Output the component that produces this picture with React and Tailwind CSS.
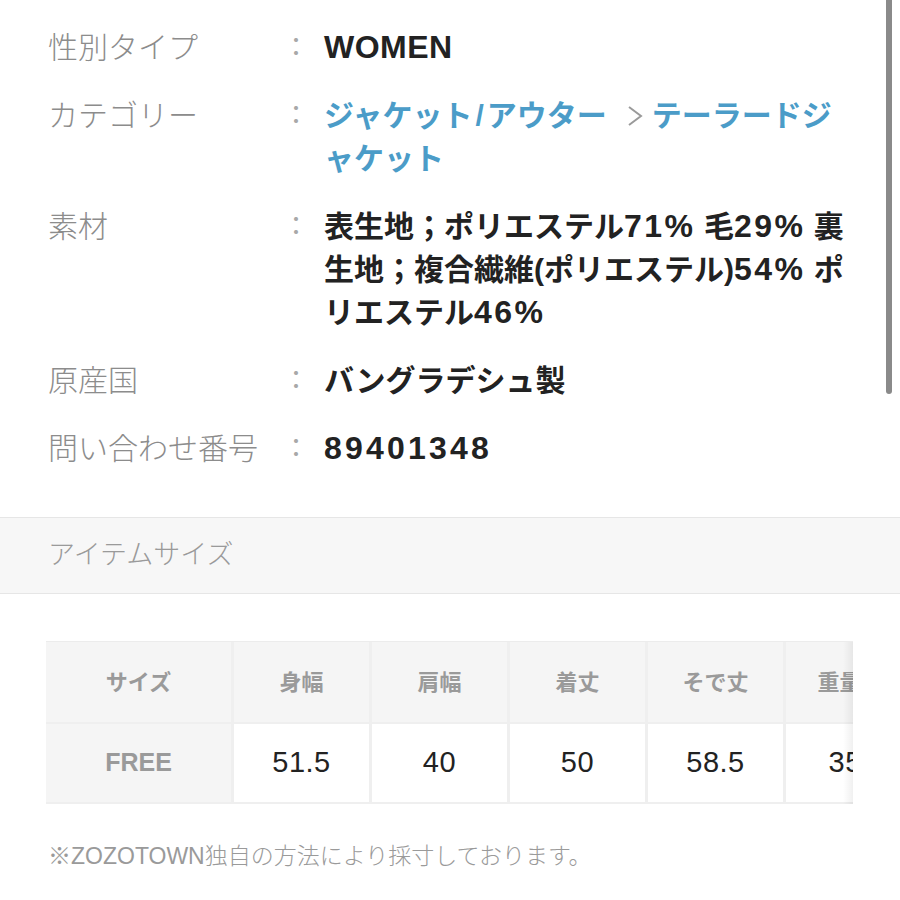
import React from 'react'

// latin runs inside the Japanese values are set a bit larger and looser
function Latin({ children, track = 'normal' }) {
  const cls = {
    normal: 'text-[32px] tracking-[0.5px]',
    wide: 'text-[32px] tracking-[2.5px]',
    wider: 'text-[32px] tracking-[3.2px]',
  }[track]
  return <span className={cls}>{children}</span>
}

function Chevron() {
  return (
    <svg width="16" height="22" viewBox="0 0 16 22" className="inline-block ml-[20px] mr-[9px] -mt-[4px] align-middle">
      <path d="M2 2 L14 11 L2 20" fill="none" stroke="#9a9a9a" strokeWidth="2" />
    </svg>
  )
}

function SpecRow({ label, children }) {
  return (
    <div className="flex items-start leading-[43px]">
      <div className="w-[233px] shrink-0 text-[30px] font-light text-[#8c8c8c]">{label}</div>
      <div className="w-[30px] shrink-0 text-center text-[26px] text-[#a8a8a8]">：</div>
      <div className="ml-[13px] text-[30px] font-semibold text-[#222] whitespace-nowrap">{children}</div>
    </div>
  )
}

const heads = ['サイズ', '身幅', '肩幅', '着丈', 'そで丈', '重量(g)']
const values = ['51.5', '40', '50', '58.5', '350']

export default function App() {
  return (
    <div className="relative w-[900px] h-[900px] overflow-hidden bg-white font-['Liberation_Sans','Noto_Sans_CJK_JP',sans-serif]">
      {/* scrollbar */}
      <div className="absolute right-[8px] top-0 w-[6px] h-[394px] rounded-b-full bg-[#8a8a8a]" />

      <div className="flex flex-col gap-[25px] pt-[26px] pl-[48px]">
        <SpecRow label="性別タイプ">
          <Latin>WOMEN</Latin>
        </SpecRow>
        <SpecRow label="カテゴリー">
          <span className="text-[#4b9cc8]">
            ジャケット<span className="mx-[3px]">/</span>アウター
          </span>
          <Chevron />
          <span className="text-[#4b9cc8]">テーラードジ</span>
          <br />
          <span className="text-[#4b9cc8]">ャケット</span>
        </SpecRow>
        <SpecRow label="素材">
          表生地；ポリエステル<Latin track="wide">71%</Latin> 毛<Latin track="wide">29%</Latin> 裏
          <br />
          生地；複合繊維(ポリエステル)<Latin track="wide">54%</Latin> ポ
          <br />
          リエステル<Latin track="wide">46%</Latin>
        </SpecRow>
        <SpecRow label="原産国">バングラデシュ製</SpecRow>
        <SpecRow label="問い合わせ番号">
          <Latin track="wider">89401348</Latin>
        </SpecRow>
      </div>

      <div className="mt-[47px] h-[77px] border-y border-[#e6e6e6] bg-[#f7f7f7] flex items-center px-[48px]">
        <span className="text-[27px] font-light text-[#9a9a9a]">アイテムサイズ</span>
      </div>

      <div className="relative mt-[47px] ml-[46px] w-[807px] overflow-hidden border-t border-[#ececec] bg-[#efefef] pb-[2px]">
        <div className="grid grid-cols-[185px_repeat(5,135px)] gap-x-[3px] gap-y-[2px] w-max">
          {heads.map((h) => (
            <div key={h} className="h-[80px] bg-[#f5f5f5] flex items-center justify-center text-[22px] font-semibold text-[#9a9a9a]">
              {h}
            </div>
          ))}
          <div className="h-[78px] bg-[#f5f5f5] flex items-center justify-center text-[25px] font-semibold text-[#9a9a9a]">
            FREE
          </div>
          {values.map((v, i) => (
            <div key={i} className="h-[78px] bg-white flex items-center justify-center text-[29px] tracking-[0.5px] text-[#222]">
              {v}
            </div>
          ))}
        </div>
        <div className="absolute right-0 top-0 bottom-0 w-[10px] bg-linear-to-l from-[rgba(0,0,0,0.06)] to-transparent" />
      </div>

      <div className="mt-[36px] pl-[48px] text-[23px] leading-[32px] font-light text-[#9a9a9a]">
        ※ZOZOTOWN独自の方法により採寸しております。
      </div>
    </div>
  )
}
